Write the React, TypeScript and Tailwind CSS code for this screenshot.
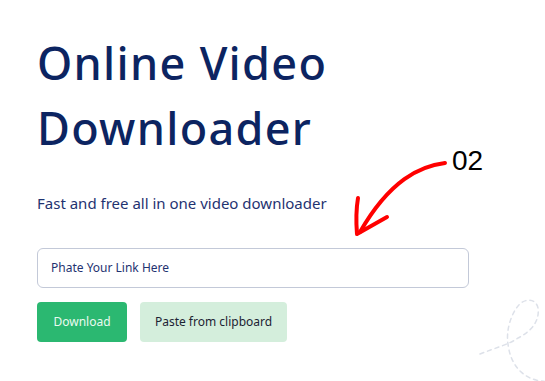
import React from 'react';

const Arrow: React.FC = () => (
  <svg width="100" height="90" viewBox="0 0 100 90" className="absolute left-[350px] top-[158px]" fill="none">
    <path d="M95 5 C 70 8, 40 22, 10 74" stroke="#ff0000" strokeWidth="4" strokeLinecap="round" />
    <path d="M8 40 C 6 52, 6 64, 7 76 L 37 59" stroke="#ff0000" strokeWidth="4" strokeLinecap="round" strokeLinejoin="round" />
  </svg>
);

const Squiggle: React.FC = () => (
  <svg width="90" height="110" viewBox="0 0 90 110" className="absolute left-[470px] top-[292px]" fill="none">
    <path
      d="M10 62 C 25 56, 40 52, 48 46 C 60 40, 70 30, 68 16 C 66 6, 54 6, 48 14 C 40 24, 36 40, 38 52 C 40 70, 50 84, 66 88 C 74 90, 80 90, 90 88"
      stroke="#dde1e9"
      strokeWidth="1.5"
      strokeDasharray="4 4"
      strokeLinecap="round"
    />
  </svg>
);

const App: React.FC = () => {
  return (
    <div className="relative w-[545px] h-[381px] overflow-hidden bg-white" style={{ fontFamily: '"Noto Sans", sans-serif' }}>
      <div className="pl-[37px] pt-[30px]">
        <h1 className="text-[45px] leading-[65px] font-medium tracking-[1.3px] text-[#0c2461]">
          Online Video
          <br />
          Downloader
        </h1>
        <p className="mt-[32px] text-[15px] text-[#1f3371]">Fast and free all in one video downloader</p>
        <div className="mt-[33px] w-[432px] h-[40px] rounded-[6px] border border-[#c3c9d8] flex items-center px-[13px]">
          <span className="text-[12px] text-[#1f3371]">Phate Your Link Here</span>
        </div>
        <div className="mt-[14px] flex gap-[13px]">
          <button className="w-[90px] h-[40px] rounded-[4px] bg-[#2bb871] text-[12px] text-[#eafaf0]">Download</button>
          <button className="w-[147px] h-[40px] rounded-[4px] bg-[#d4eedc] text-[12px] text-[#1c2333]">Paste from clipboard</button>
        </div>
      </div>
      <Arrow />
      <div className="absolute left-[452px] top-[143px] text-[28px] leading-[36px] text-black" style={{ fontFamily: '"Liberation Sans", sans-serif' }}>02</div>
      <Squiggle />
    </div>
  );
};

export default App;
